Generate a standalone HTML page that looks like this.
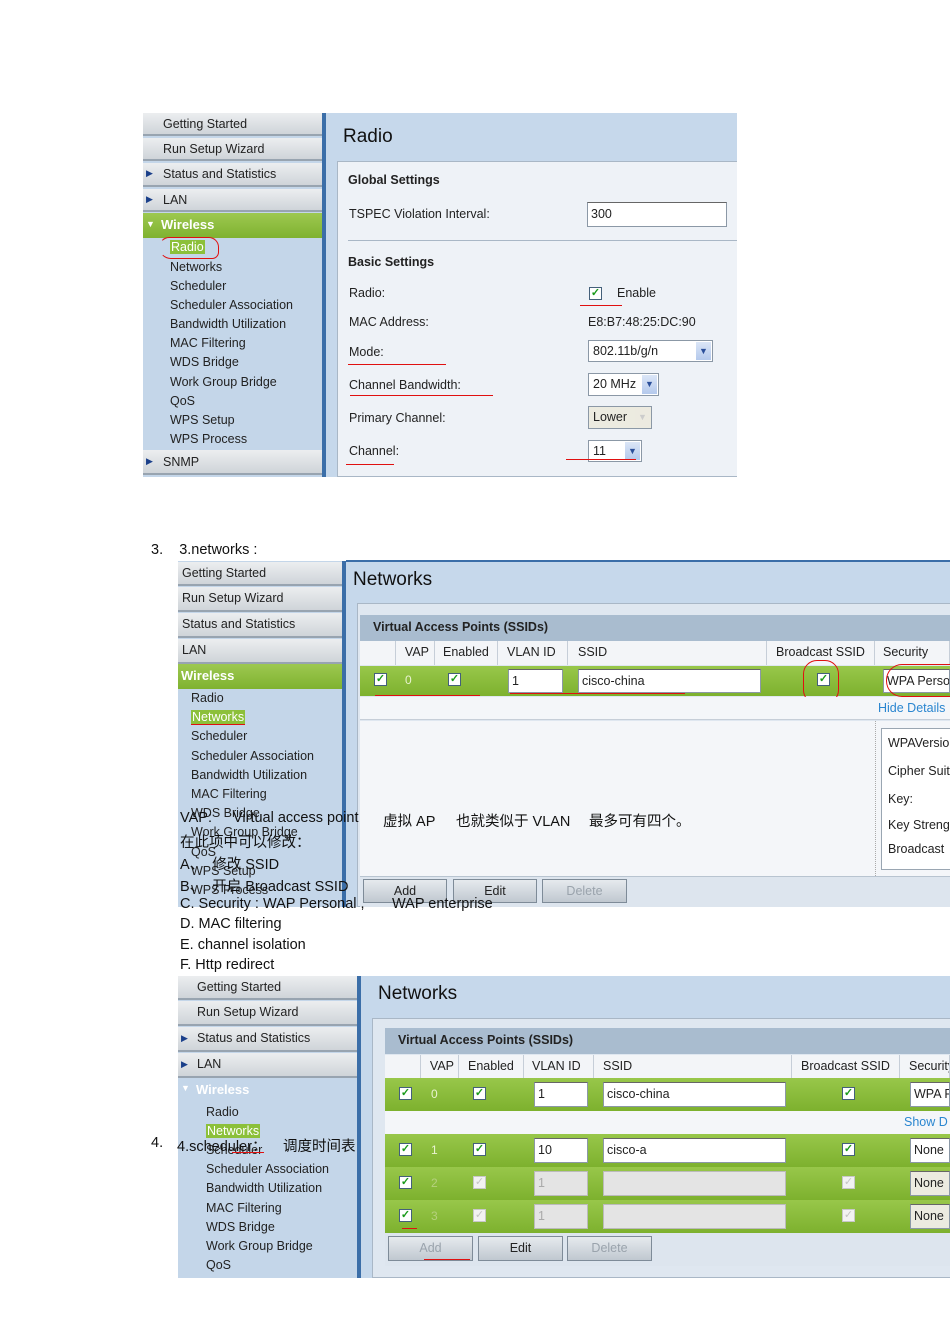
<!DOCTYPE html>
<html><head><meta charset="utf-8"><style>
*{margin:0;padding:0;box-sizing:border-box}
body{width:950px;height:1344px;background:#fff;position:relative;overflow:hidden;font-family:"Liberation Sans",Arial,sans-serif;font-size:12px;color:#222}
.a{position:absolute;white-space:nowrap}
.side{position:absolute;background:#c4d6e9}
.nav{position:absolute;background:linear-gradient(#eceef0,#cfd4d9);border-bottom:2px solid #98a4b0;font-size:12.5px;color:#222;line-height:22px}
.grn{position:absolute;background:linear-gradient(#9dc850,#7fb230);color:#fff;font-weight:bold;font-size:13px;line-height:23px}
.sub{position:absolute;font-size:12.5px;color:#222;white-space:nowrap}
.div{position:absolute;background:#3b6ea8}
.tri{font-size:9px;color:#1a3f8a;position:absolute}
.main{position:absolute;background:#c6d8eb}
.panel{position:absolute;background:#eef2f7;border:1px solid #a9b7c6}
.lbl{position:absolute;font-size:12.5px;color:#222;white-space:nowrap}
.inp{position:absolute;background:#fff;border:1px solid #8b98a6;border-top-color:#666;font-size:12.5px;padding-left:3px;white-space:nowrap;overflow:hidden}
.cb{position:absolute;width:13px;height:13px;border:1px solid #44607a;background:#fff;color:#1a9a1a;font-size:11px;line-height:11px;text-align:center;font-weight:bold}
.cbd{position:absolute;width:13px;height:13px;border:1px solid #c8c8c8;background:#f2f2f2;color:#c4c4c4;font-size:11px;line-height:11px;text-align:center}
.sel{position:absolute;background:#fff;border:1px solid #8b98a6;font-size:12.5px;padding-left:4px}
.dd{position:absolute;right:1px;top:1px;bottom:1px;width:15px;background:linear-gradient(#dbe6f7,#b4c9ec);color:#2b4f9a;font-size:9px;text-align:center;line-height:18px}
.red{position:absolute;background:#e01010;height:1px}
.hdr{position:absolute;background:#a9bccf;font-weight:bold;font-size:12.5px;line-height:24px;padding-left:13px}
.col{position:absolute;background:#f3f5f8;font-size:12.5px;line-height:22px;border-right:1px solid #c6ced8;white-space:nowrap;overflow:hidden}
.row{position:absolute;background:linear-gradient(#98c74a,#7db12e)}
.btn{position:absolute;background:linear-gradient(#e6eaee,#c0c8d0);border:1px solid #7e8b98;font-size:12.5px;text-align:center;line-height:22px}
.ov{position:absolute;font-family:"Liberation Sans","Noto Sans CJK SC",sans-serif;font-size:14.5px;color:#111;white-space:nowrap}
.w{color:#fff}
</style></head><body>

<!-- ========== IMAGE 1 ========== -->
<div class="side" style="left:143px;top:113px;width:180px;height:364px"></div>
<div class="nav" style="left:143px;top:113px;width:179px;height:23px;padding-left:20px">Getting Started</div>
<div class="nav" style="left:143px;top:138px;width:179px;height:23px;padding-left:20px">Run Setup Wizard</div>
<div class="nav" style="left:143px;top:163px;width:179px;height:24px;padding-left:20px">Status and Statistics</div>
<div class="tri" style="left:146px;top:168px">&#9654;</div>
<div class="nav" style="left:143px;top:189px;width:179px;height:23px;padding-left:20px">LAN</div>
<div class="tri" style="left:146px;top:194px">&#9654;</div>
<div class="grn" style="left:143px;top:213px;width:179px;height:25px;padding-left:18px">Wireless</div>
<div class="a w" style="left:146px;top:219px;font-size:9px">&#9660;</div>
<div class="sub" style="left:170px;top:240px;background:#8cc03a;color:#fff;padding:0 1px">Radio</div>
<div class="sub" style="left:170px;top:260px">Networks</div>
<div class="sub" style="left:170px;top:279px">Scheduler</div>
<div class="sub" style="left:170px;top:298px">Scheduler Association</div>
<div class="sub" style="left:170px;top:317px">Bandwidth Utilization</div>
<div class="sub" style="left:170px;top:336px">MAC Filtering</div>
<div class="sub" style="left:170px;top:355px">WDS Bridge</div>
<div class="sub" style="left:170px;top:375px">Work Group Bridge</div>
<div class="sub" style="left:170px;top:394px">QoS</div>
<div class="sub" style="left:170px;top:413px">WPS Setup</div>
<div class="sub" style="left:170px;top:432px">WPS Process</div>
<div class="nav" style="left:143px;top:450px;width:179px;height:25px;padding-left:20px;line-height:24px">SNMP</div>
<div class="tri" style="left:146px;top:456px">&#9654;</div>
<div class="a" style="left:159px;top:237px;width:60px;height:22px;border:1px solid #e01010;border-radius:12px 12px 8px 14px;border-left-color:transparent"></div>
<div class="div" style="left:322px;top:113px;width:4px;height:364px"></div>
<div class="main" style="left:326px;top:113px;width:411px;height:364px"></div>
<div class="a" style="left:343px;top:126px;font-size:19px;color:#111">Radio</div>
<div class="panel" style="left:337px;top:161px;width:400px;height:316px;border-right:none"></div>
<div class="lbl" style="left:348px;top:173px;font-weight:bold">Global Settings</div>
<div class="lbl" style="left:349px;top:207px">TSPEC Violation Interval:</div>
<div class="inp" style="left:587px;top:202px;width:140px;height:25px;line-height:23px">300</div>
<div class="a" style="left:348px;top:240px;width:389px;height:1px;background:#a9b7c6"></div>
<div class="lbl" style="left:348px;top:255px;font-weight:bold">Basic Settings</div>
<div class="lbl" style="left:349px;top:286px">Radio:</div>
<div class="cb" style="left:589px;top:287px">&#10003;</div>
<div class="lbl" style="left:617px;top:286px">Enable</div>
<div class="red" style="left:580px;top:305px;width:42px"></div>
<div class="lbl" style="left:349px;top:315px">MAC Address:</div>
<div class="lbl" style="left:588px;top:315px">E8:B7:48:25:DC:90</div>
<div class="lbl" style="left:349px;top:345px">Mode:</div>
<div class="red" style="left:348px;top:364px;width:98px"></div>
<div class="sel" style="left:588px;top:340px;width:125px;height:22px;line-height:20px">802.11b/g/n<div class="dd">&#9660;</div></div>
<div class="lbl" style="left:349px;top:378px">Channel Bandwidth:</div>
<div class="red" style="left:350px;top:395px;width:143px"></div>
<div class="sel" style="left:588px;top:373px;width:71px;height:23px;line-height:21px">20 MHz<div class="dd">&#9660;</div></div>
<div class="lbl" style="left:349px;top:411px">Primary Channel:</div>
<div class="sel" style="left:588px;top:406px;width:64px;height:23px;line-height:21px;background:#ecebe0">Lower<div class="dd" style="background:#eceae0;color:#ccc">&#9660;</div></div>
<div class="lbl" style="left:349px;top:444px">Channel:</div>
<div class="red" style="left:346px;top:464px;width:48px"></div>
<div class="sel" style="left:588px;top:440px;width:54px;height:22px;line-height:20px">11<div class="dd">&#9660;</div></div>
<div class="red" style="left:566px;top:459px;width:70px"></div>

<!-- ========== text ========== -->
<div class="ov" style="left:151px;top:542px">3.&nbsp;&nbsp;&nbsp;&nbsp;3.networks :</div>

<!-- ========== IMAGE 2 ========== -->
<div class="side" style="left:178px;top:561px;width:166px;height:346px"></div>
<div class="nav" style="left:178px;top:562px;width:164px;height:24px;padding-left:4px">Getting Started</div>
<div class="nav" style="left:178px;top:587px;width:164px;height:25px;padding-left:4px">Run Setup Wizard</div>
<div class="nav" style="left:178px;top:613px;width:164px;height:25px;padding-left:4px">Status and Statistics</div>
<div class="nav" style="left:178px;top:639px;width:164px;height:25px;padding-left:4px">LAN</div>
<div class="grn" style="left:178px;top:664px;width:164px;height:25px;padding-left:3px">Wireless</div>
<div class="sub" style="left:191px;top:691px">Radio</div>
<div class="sub" style="left:191px;top:710px;background:#8cc03a;color:#fff;padding:0 1px;border-bottom:1px solid #e01010">Networks</div>
<div class="sub" style="left:191px;top:729px">Scheduler</div>
<div class="sub" style="left:191px;top:749px">Scheduler Association</div>
<div class="sub" style="left:191px;top:768px">Bandwidth Utilization</div>
<div class="sub" style="left:191px;top:787px">MAC Filtering</div>
<div class="sub" style="left:191px;top:806px">WDS Bridge</div>
<div class="sub" style="left:191px;top:825px">Work Group Bridge</div>
<div class="sub" style="left:191px;top:845px">QoS</div>
<div class="sub" style="left:191px;top:864px">WPS Setup</div>
<div class="sub" style="left:191px;top:883px">WPS Process</div>
<div class="div" style="left:342px;top:561px;width:4px;height:346px"></div>
<div class="a" style="left:346px;top:560px;width:604px;height:2px;background:#3b6ea8"></div>
<div class="main" style="left:346px;top:562px;width:604px;height:345px"></div>
<div class="a" style="left:353px;top:569px;font-size:19px;color:#111">Networks</div>
<div class="panel" style="left:357px;top:603px;width:593px;height:304px;border-right:none;background:#dfe7f0"></div>
<div class="hdr" style="left:360px;top:615px;width:590px;height:26px">Virtual Access Points (SSIDs)</div>
<div class="col" style="left:360px;top:641px;width:36px;height:24px"></div>
<div class="col" style="left:396px;top:641px;width:39px;height:24px;text-align:right;padding-right:5px">VAP</div>
<div class="col" style="left:435px;top:641px;width:63px;height:24px;padding-left:8px">Enabled</div>
<div class="col" style="left:498px;top:641px;width:70px;height:24px;padding-left:9px">VLAN ID</div>
<div class="col" style="left:568px;top:641px;width:199px;height:24px;padding-left:10px">SSID</div>
<div class="col" style="left:767px;top:641px;width:108px;height:24px;padding-left:9px">Broadcast SSID</div>
<div class="col" style="left:875px;top:641px;width:75px;height:24px;padding-left:8px">Security</div>
<div class="row" style="left:360px;top:666px;width:590px;height:30px"></div>
<div class="cb" style="left:374px;top:673px">&#10003;</div>
<div class="a" style="left:405px;top:673px;color:#e9f3d0">0</div>
<div class="cb" style="left:448px;top:673px">&#10003;</div>
<div class="inp" style="left:508px;top:669px;width:55px;height:24px;line-height:22px">1</div>
<div class="inp" style="left:578px;top:669px;width:183px;height:24px;line-height:22px">cisco-china</div>
<div class="cb" style="left:817px;top:673px">&#10003;</div>
<div class="inp" style="left:883px;top:669px;width:67px;height:24px;line-height:22px">WPA Perso</div>
<div class="red" style="left:375px;top:695px;width:105px"></div>
<div class="red" style="left:510px;top:693px;width:175px"></div>
<div class="a" style="left:803px;top:660px;width:36px;height:44px;border:1px solid #e01010;border-radius:14px"></div>
<div class="a" style="left:886px;top:664px;width:64px;height:33px;border:1px solid #e01010;border-radius:16px 0 0 16px;border-right:none"></div>
<div class="a" style="left:360px;top:697px;width:590px;height:23px;background:#f4f6f9;border-bottom:1px solid #c6ced8"></div>
<div class="a" style="left:878px;top:701px;color:#2a86d0;font-size:12.5px">Hide Details</div>
<div class="a" style="left:360px;top:721px;width:590px;height:155px;background:#f4f6f9"></div>
<div class="a" style="left:875px;top:721px;width:1px;height:155px;border-left:1px dotted #aaa"></div>
<div class="a" style="left:881px;top:728px;width:69px;height:142px;background:#fff;border:1px solid #9aa6b2;border-right:none"></div>
<div class="lbl" style="left:888px;top:736px">WPAVersion</div>
<div class="lbl" style="left:888px;top:764px">Cipher Suite</div>
<div class="lbl" style="left:888px;top:792px">Key:</div>
<div class="lbl" style="left:888px;top:818px">Key Strength</div>
<div class="lbl" style="left:888px;top:842px">Broadcast</div>
<div class="a" style="left:360px;top:876px;width:590px;height:31px;background:#dde5ee;border-top:1px solid #b8c4d0"></div>
<div class="btn" style="left:363px;top:879px;width:84px;height:24px">Add</div>
<div class="btn" style="left:453px;top:879px;width:84px;height:24px">Edit</div>
<div class="btn" style="left:542px;top:879px;width:85px;height:24px;color:#9aa3ac">Delete</div>

<!-- overlay text 2 -->
<div class="ov" style="left:180px;top:810px">VAP:</div>
<div class="ov" style="left:233px;top:810px">Virtual access point</div>
<div class="ov" style="left:383px;top:810px">虚拟 AP</div>
<div class="ov" style="left:456px;top:810px">也就类似于 VLAN</div>
<div class="ov" style="left:589px;top:810px">最多可有四个。</div>
<div class="ov" style="left:180px;top:831px">在此项中可以修改：</div>
<div class="ov" style="left:180px;top:853px">A、&nbsp;&nbsp;修改 SSID</div>
<div class="ov" style="left:180px;top:875px">B、&nbsp;&nbsp;开启 Broadcast SSID</div>
<div class="ov" style="left:180px;top:896px">C. Security : WAP Personal ,</div>
<div class="ov" style="left:392px;top:896px">WAP enterprise</div>
<div class="ov" style="left:180px;top:916px">D. MAC filtering</div>
<div class="ov" style="left:180px;top:937px">E. channel isolation</div>
<div class="ov" style="left:180px;top:957px">F. Http redirect</div>

<!-- ========== IMAGE 3 ========== -->
<div class="side" style="left:178px;top:976px;width:181px;height:302px"></div>
<div class="nav" style="left:178px;top:976px;width:179px;height:24px;padding-left:19px">Getting Started</div>
<div class="nav" style="left:178px;top:1001px;width:179px;height:25px;padding-left:19px">Run Setup Wizard</div>
<div class="nav" style="left:178px;top:1027px;width:179px;height:25px;padding-left:19px">Status and Statistics</div>
<div class="tri" style="left:181px;top:1033px">&#9654;</div>
<div class="nav" style="left:178px;top:1053px;width:179px;height:25px;padding-left:19px">LAN</div>
<div class="tri" style="left:181px;top:1059px">&#9654;</div>
<div class="a w" style="left:178px;top:1079px;width:179px;height:24px;padding-left:18px;font-weight:bold;font-size:13px;line-height:22px;background:#c4d6e9">Wireless</div>
<div class="a w" style="left:181px;top:1083px;font-size:9px">&#9660;</div>
<div class="sub" style="left:206px;top:1105px">Radio</div>
<div class="sub" style="left:206px;top:1124px;background:#8cc03a;color:#fff;padding:0 1px">Networks</div>
<div class="sub" style="left:206px;top:1143px">Scheduler</div>
<div class="sub" style="left:206px;top:1162px">Scheduler Association</div>
<div class="sub" style="left:206px;top:1181px">Bandwidth Utilization</div>
<div class="sub" style="left:206px;top:1201px">MAC Filtering</div>
<div class="sub" style="left:206px;top:1220px">WDS Bridge</div>
<div class="sub" style="left:206px;top:1239px">Work Group Bridge</div>
<div class="sub" style="left:206px;top:1258px">QoS</div>
<div class="div" style="left:357px;top:976px;width:4px;height:302px"></div>
<div class="main" style="left:361px;top:976px;width:589px;height:302px"></div>
<div class="a" style="left:378px;top:983px;font-size:19px;color:#111">Networks</div>
<div class="panel" style="left:372px;top:1018px;width:578px;height:260px;border-right:none;background:#dfe7f0"></div>
<div class="hdr" style="left:385px;top:1028px;width:565px;height:26px">Virtual Access Points (SSIDs)</div>
<div class="col" style="left:385px;top:1055px;width:36px;height:23px"></div>
<div class="col" style="left:421px;top:1055px;width:38px;height:23px;text-align:right;padding-right:4px">VAP</div>
<div class="col" style="left:459px;top:1055px;width:65px;height:23px;padding-left:9px">Enabled</div>
<div class="col" style="left:524px;top:1055px;width:70px;height:23px;padding-left:8px">VLAN ID</div>
<div class="col" style="left:594px;top:1055px;width:198px;height:23px;padding-left:9px">SSID</div>
<div class="col" style="left:792px;top:1055px;width:108px;height:23px;padding-left:9px">Broadcast SSID</div>
<div class="col" style="left:900px;top:1055px;width:50px;height:23px;padding-left:9px">Security</div>

<div class="row" style="left:385px;top:1078px;width:565px;height:33px"></div>
<div class="cb" style="left:399px;top:1087px">&#10003;</div>
<div class="a" style="left:431px;top:1087px;color:#e9f3d0">0</div>
<div class="cb" style="left:473px;top:1087px">&#10003;</div>
<div class="inp" style="left:534px;top:1082px;width:54px;height:25px;line-height:23px">1</div>
<div class="inp" style="left:603px;top:1082px;width:183px;height:25px;line-height:23px">cisco-china</div>
<div class="cb" style="left:842px;top:1087px">&#10003;</div>
<div class="inp" style="left:910px;top:1082px;width:40px;height:25px;line-height:23px">WPA F</div>
<div class="a" style="left:385px;top:1111px;width:565px;height:23px;background:#f4f6f9"></div>
<div class="a" style="left:904px;top:1115px;color:#2a86d0;font-size:12.5px">Show D</div>

<div class="row" style="left:385px;top:1134px;width:565px;height:33px"></div>
<div class="cb" style="left:399px;top:1143px">&#10003;</div>
<div class="a" style="left:431px;top:1143px;color:#e9f3d0">1</div>
<div class="cb" style="left:473px;top:1143px">&#10003;</div>
<div class="inp" style="left:534px;top:1138px;width:54px;height:25px;line-height:23px">10</div>
<div class="inp" style="left:603px;top:1138px;width:183px;height:25px;line-height:23px">cisco-a</div>
<div class="cb" style="left:842px;top:1143px">&#10003;</div>
<div class="inp" style="left:910px;top:1138px;width:40px;height:25px;line-height:23px">None</div>

<div class="row" style="left:385px;top:1167px;width:565px;height:33px"></div>
<div class="cb" style="left:399px;top:1176px">&#10003;</div>
<div class="a" style="left:431px;top:1176px;color:#b5d07e">2</div>
<div class="cbd" style="left:473px;top:1176px">&#10003;</div>
<div class="inp" style="left:534px;top:1171px;width:54px;height:25px;line-height:23px;background:#e4e4e4;color:#aaa;border-color:#bbb">1</div>
<div class="inp" style="left:603px;top:1171px;width:183px;height:25px;background:#e4e4e4;border-color:#bbb"></div>
<div class="cbd" style="left:842px;top:1176px">&#10003;</div>
<div class="inp" style="left:910px;top:1171px;width:40px;height:25px;line-height:23px;background:#ecebe0">None</div>

<div class="row" style="left:385px;top:1200px;width:565px;height:33px"></div>
<div class="cb" style="left:399px;top:1209px">&#10003;</div>
<div class="a" style="left:431px;top:1209px;color:#b5d07e">3</div>
<div class="cbd" style="left:473px;top:1209px">&#10003;</div>
<div class="inp" style="left:534px;top:1204px;width:54px;height:25px;line-height:23px;background:#e4e4e4;color:#aaa;border-color:#bbb">1</div>
<div class="inp" style="left:603px;top:1204px;width:183px;height:25px;background:#e4e4e4;border-color:#bbb"></div>
<div class="cbd" style="left:842px;top:1209px">&#10003;</div>
<div class="inp" style="left:910px;top:1204px;width:40px;height:25px;line-height:23px;background:#ecebe0">None</div>
<div class="red" style="left:402px;top:1228px;width:15px"></div>

<div class="a" style="left:385px;top:1233px;width:565px;height:33px;background:#dde5ee"></div>
<div class="btn" style="left:388px;top:1236px;width:85px;height:25px;color:#9aa3ac">Add</div>
<div class="red" style="left:424px;top:1259px;width:46px"></div>
<div class="btn" style="left:478px;top:1236px;width:85px;height:25px">Edit</div>
<div class="btn" style="left:567px;top:1236px;width:85px;height:25px;color:#9aa3ac">Delete</div>

<div class="ov" style="left:151px;top:1135px">4.</div>
<div class="ov" style="left:177px;top:1135px">4.scheduler：</div>
<div class="ov" style="left:283px;top:1135px">调度时间表</div>
<div class="red" style="left:232px;top:1152px;width:32px"></div>
</body></html>
